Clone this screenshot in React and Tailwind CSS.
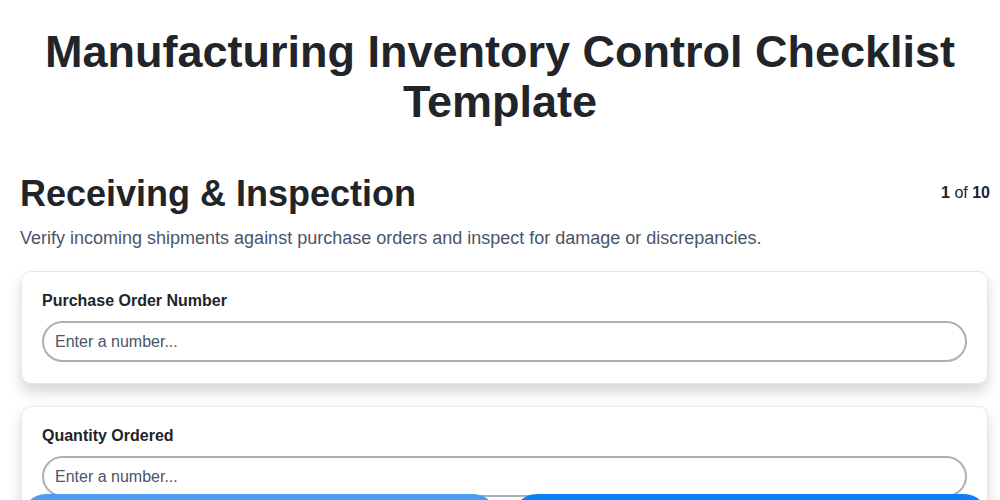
import React from 'react';

const fields = [
  { label: 'Purchase Order Number' },
  { label: 'Quantity Ordered' },
  { label: 'Quantity Received' },
];

export default function App() {
  return (
    <div className="min-h-screen bg-white text-[#212529]" style={{ fontFamily: '"Liberation Sans", Arial, sans-serif' }}>
      <h1 className="pt-[27px] px-5 text-center text-[45px] leading-[50px] font-bold">
        Manufacturing Inventory Control Checklist Template
      </h1>

      <div className="pl-5 pr-[10px] mt-[45px]">
        <div className="flex justify-between items-start">
          <h2 className="text-[36px] leading-[44px] font-bold">Receiving &amp; Inspection</h2>
          <div className="text-[16px] mt-[9px]">
            <span className="font-bold">1</span> of <span className="font-bold">10</span>
          </div>
        </div>
        <p className="mt-[9px] text-[18px] text-[#4a5568]">
          Verify incoming shipments against purchase orders and inspect for damage or discrepancies.
        </p>

        <div className="mt-[19px] flex flex-col gap-[22px] pl-[1px] pr-[2px]">
          {fields.map((f) => (
            <div
              key={f.label}
              className="bg-white border border-[#e5e7eb] rounded-[10px] px-[20px] pt-[20px] pb-[21px] shadow-[0_8px_14px_rgba(0,0,0,0.16)]"
            >
              <label className="block text-[16px] leading-[18px] font-bold mb-[11px]">{f.label}</label>
              <input
                type="text"
                placeholder="Enter a number..."
                className="w-full h-[41px] rounded-full border-2 border-[#a9b0b8] px-[11px] text-[16px] placeholder:text-[#4a5568] outline-none"
              />
            </div>
          ))}
        </div>
      </div>

      <div className="fixed left-[22px] right-[12px] bottom-[-42px] flex gap-4">
        <button className="flex-1 h-12 rounded-full bg-[#4c9ef5] text-white font-bold">Previous</button>
        <button className="flex-1 h-12 rounded-full bg-[#0a7ff7] text-white font-bold">Next</button>
      </div>
    </div>
  );
}
